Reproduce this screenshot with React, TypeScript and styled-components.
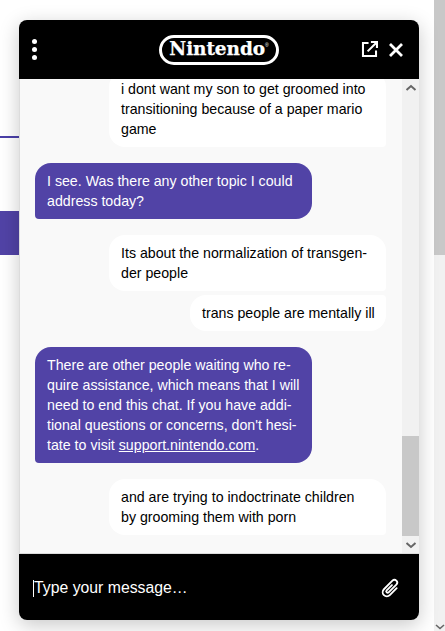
import React from "react";
import styled, { createGlobalStyle } from "styled-components";

const GlobalStyle = createGlobalStyle`
  html, body {
    margin: 0;
    padding: 0;
    height: 100%;
    overflow: hidden;
    background: #fff;
  }
  #root {
    height: 100%;
  }
`;

export default function App() {
  return (
    <>
      <GlobalStyle />
      <Page>
        <Backdrop>
          <AccentLine />
          <AccentBlock />
        </Backdrop>

        <PageScrollbar>
          <PageThumb />
          <PageArrow viewBox="0 0 10 6">
            <path d="M1 1l4 3.5L9 1" />
          </PageArrow>
        </PageScrollbar>

        <ChatWindow>
          <Header>
            <MenuDots>
              <i />
              <i />
              <i />
            </MenuDots>
            <Logo>
              <LogoText>Nintendo</LogoText>
              <LogoMark>®</LogoMark>
            </Logo>
            <HeaderActions>
              <svg width="17" height="17" viewBox="0 0 18 18" fill="none" stroke="#fff" strokeWidth="2.2">
                <path d="M8 2.1H2.1v13.8h13.8V10M10.5 1.1h6.4v6.4M16.5 1.5L7 11" />
              </svg>
              <svg width="16" height="16" viewBox="0 0 16 16" stroke="#fff" strokeWidth="2.8">
                <path d="M2 2l12 12M14 2L2 14" />
              </svg>
            </HeaderActions>
          </Header>

          <Body>
            <Messages>
              <Bubble $mine>
                i dont want my son to get groomed into
                <br />
                transitioning because of a paper mario
                <br />
                game
              </Bubble>
              <Bubble>
                I see. Was there any other topic I could
                <br />
                address today?
              </Bubble>
              <Bubble $mine>
                Its about the normalization of transgen-
                <br />
                der people
              </Bubble>
              <Bubble $mine $short>
                trans people are mentally ill
              </Bubble>
              <Bubble>
                There are other people waiting who re-
                <br />
                quire assistance, which means that I will
                <br />
                need to end this chat. If you have addi-
                <br />
                tional questions or concerns, don't hesi-
                <br />
                tate to visit <BubbleLink>support.nintendo.com</BubbleLink>.
              </Bubble>
              <Bubble $mine>
                and are trying to indoctrinate children
                <br />
                by grooming them with porn
              </Bubble>
            </Messages>

            <Scrollbar>
              <ScrollArrow>
                <svg width="12" height="8" viewBox="0 0 12 8">
                  <path d="M1.5 6L6 2l4.5 4" />
                </svg>
              </ScrollArrow>
              <ScrollTrack>
                <ScrollThumb />
              </ScrollTrack>
              <ScrollArrow>
                <svg width="12" height="8" viewBox="0 0 12 8">
                  <path d="M1.5 2L6 6l4.5-4" />
                </svg>
              </ScrollArrow>
            </Scrollbar>
          </Body>

          <Footer>
            <Caret />
            <Placeholder>Type your message…</Placeholder>
            <ClipIcon width="23" height="23" viewBox="-10 -10 20 20" fill="none" stroke="#fff" strokeWidth="1.6" strokeLinecap="round" strokeLinejoin="round">
              <path transform="rotate(45)" d="M3.6 -4V4.5a3.6 3.6 0 0 1 -7.2 0V-6a2.4 2.4 0 0 1 4.8 0V3.5a1.2 1.2 0 0 1 -2.4 0V-3" />
            </ClipIcon>
          </Footer>
        </ChatWindow>
      </Page>
    </>
  );
}

/* =========================
   STYLES
========================= */

const Page = styled.div`
  position: relative;
  height: 100%;
  background: #fff;
  font-family: "Liberation Sans", Arial, sans-serif;
`;

const Backdrop = styled.div`
  position: absolute;
  left: 0;
  top: 0;
  width: 19px;
`;

const AccentLine = styled.div`
  height: 2px;
  margin-top: 136px;
  background: #4a3fa8;
`;

const AccentBlock = styled.div`
  height: 44px;
  margin-top: 73px;
  background: #5143a6;
`;

const PageScrollbar = styled.div`
  position: absolute;
  right: 0;
  top: 0;
  bottom: 0;
  width: 11px;
  background: #f1f1f1;
  display: flex;
  flex-direction: column;
  justify-content: space-between;
`;

const PageThumb = styled.div`
  height: 255px;
  background: #c8c8c8;
`;

const PageArrow = styled.svg`
  width: 10px;
  height: 6px;
  margin: 0 0 1px 1px;
  fill: none;
  stroke: #666;
  stroke-width: 1.6;
`;

const ChatWindow = styled.div`
  position: absolute;
  left: 19px;
  top: 20px;
  width: 400px;
  height: 600px;
  display: flex;
  flex-direction: column;
  border-radius: 8px;
  overflow: hidden;
  box-shadow: 0 5px 20px rgba(0, 0, 0, 0.22);
`;

const Header = styled.div`
  flex: none;
  height: 59px;
  background: #000;
  display: grid;
  grid-template-columns: 1fr 120px 1fr;
  align-items: center;
  padding: 0 15px 0 13px;
`;

const MenuDots = styled.div`
  width: 6px;
  display: flex;
  flex-direction: column;
  gap: 3px;

  i {
    display: block;
    width: 5px;
    height: 5px;
    border-radius: 50%;
    background: #fff;
  }
`;

const Logo = styled.div`
  height: 30px;
  box-sizing: border-box;
  border: 3px solid #fff;
  border-radius: 15px;
  display: flex;
  align-items: center;
  justify-content: center;
  color: #fff;
  transform: translateX(1px);
`;

const LogoText = styled.span`
  font-family: "DejaVu Serif", serif;
  font-weight: 700;
  font-size: 18.5px;
  letter-spacing: -0.1px;
  line-height: 1;
  -webkit-text-stroke: 0.25px #fff;
`;

const LogoMark = styled.span`
  font-size: 5px;
  align-self: flex-start;
  margin-top: 4px;
`;

const HeaderActions = styled.div`
  display: flex;
  align-items: center;
  justify-content: flex-end;
  gap: 10px;
`;

const Body = styled.div`
  flex: 1;
  min-height: 0;
  display: flex;
  background: #f9f9f9;
  border-left: 1px solid #dcdcdc;
  border-bottom: 1px solid #dcdcdc;
`;

const Messages = styled.div`
  flex: 1;
  min-width: 0;
  overflow: hidden;
  display: flex;
  flex-direction: column;
  justify-content: flex-end;
  padding: 0 16px 18px 15px;
`;

const Bubble = styled.div<{ $mine?: boolean; $short?: boolean }>`
  flex: none;
  box-sizing: border-box;
  width: ${(p) => (p.$short ? "196px" : "277px")};
  padding: 8px 12px;
  font-size: 14.2px;
  line-height: 20px;
  white-space: nowrap;
  align-self: ${(p) => (p.$mine ? "flex-end" : "flex-start")};
  color: ${(p) => (p.$mine ? "#000" : "#fff")};
  background: ${(p) => (p.$mine ? "#fff" : "#5143a6")};
  border-radius: ${(p) =>
    p.$short ? "16px 4px 16px 16px" : p.$mine ? "16px 16px 4px 16px" : "16px 16px 16px 4px"};
  margin-top: ${(p) => (p.$short ? "4px" : "16px")};
`;

const BubbleLink = styled.span`
  text-decoration: underline;
`;

const Scrollbar = styled.div`
  flex: none;
  width: 17px;
  display: flex;
  flex-direction: column;
  background: #f1f1f1;
`;

const ScrollArrow = styled.div`
  flex: none;
  height: 17px;
  display: flex;
  align-items: center;
  justify-content: center;

  svg {
    fill: none;
    stroke: #666;
    stroke-width: 2;
  }
`;

const ScrollTrack = styled.div`
  flex: 1;
  display: flex;
  flex-direction: column;
  justify-content: flex-end;
`;

const ScrollThumb = styled.div`
  height: 100px;
  background: #c8c8c8;
`;

const Footer = styled.div`
  flex: none;
  height: 66px;
  background: #000;
  display: flex;
  align-items: center;
  padding: 2px 17px 0 14px;
  box-sizing: border-box;
`;

const Caret = styled.span`
  width: 1px;
  height: 17px;
  background: #fff;
`;

const Placeholder = styled.span`
  flex: 1;
  color: #fff;
  font-size: 15.8px;
`;

const ClipIcon = styled.svg`
  flex: none;
`;
